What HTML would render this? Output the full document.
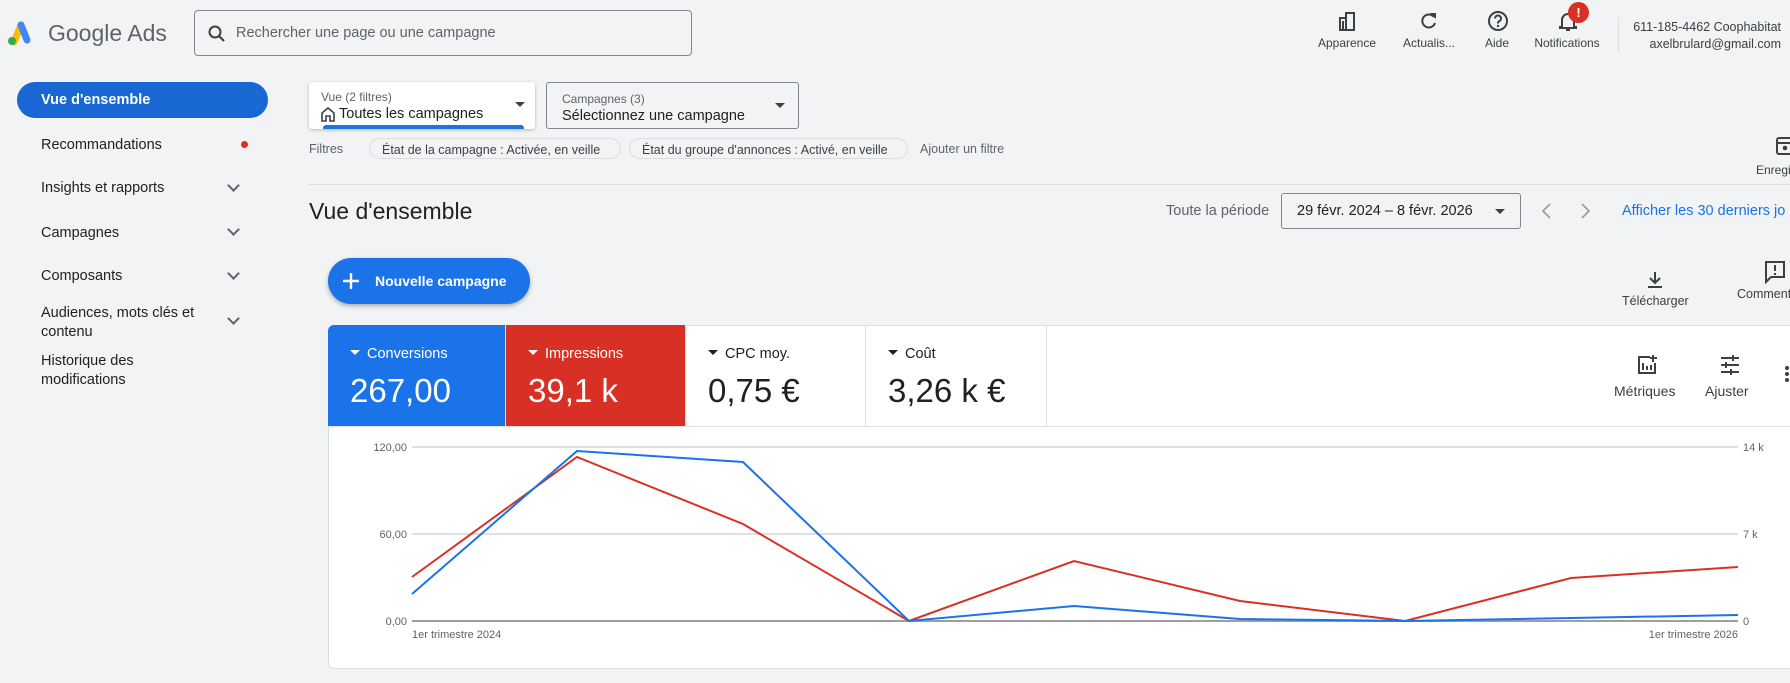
<!DOCTYPE html>
<html><head><meta charset="utf-8"><style>
*{box-sizing:border-box;margin:0;padding:0}
body{width:1790px;height:683px;overflow:hidden;background:#f1f3f4;font-family:"Liberation Sans",Arial,sans-serif;color:#202124;position:relative}
.a{position:absolute;white-space:nowrap}
.hi{position:absolute;text-align:center;font-size:12px;color:#3c4043;width:80px}
.nav{position:absolute;left:41px;font-size:14.5px;color:#202124}
.chev{position:absolute;left:229px;width:9px;height:9px;border-right:2px solid #5f6368;border-bottom:2px solid #5f6368;transform:rotate(45deg)}
.chip{position:absolute;top:138px;height:21px;border:1px solid #dadce0;border-radius:11px;font-size:12.5px;color:#3c4043;padding:4px 12px 0;background:#f1f3f4}
.tile{position:absolute;top:325px;height:101px;padding:21px 0 0 22px;border-right:1px solid #e0e0e0}
.tile .l{font-size:14.5px}
.tile .v{font-size:33px;margin-top:10px}
.tri{display:inline-block;width:0;height:0;border-left:5px solid transparent;border-right:5px solid transparent;border-top:5px solid currentColor;vertical-align:middle;margin-right:7px;position:relative;top:-2px}
</style></head><body>

<svg class="a" style="left:5px;top:20px" width="26" height="26" viewBox="0 0 26 26">
<path d="M9 22 L16 5" stroke="#fbbc04" stroke-width="7" stroke-linecap="round"/>
<path d="M16 5 L22 20" stroke="#4285f4" stroke-width="7" stroke-linecap="round"/>
<circle cx="7" cy="21" r="4" fill="#34a853"/>
</svg>
<div class="a" style="left:48px;top:20px;font-size:23px;color:#5f6368">Google Ads</div>

<div class="a" style="left:194px;top:10px;width:498px;height:46px;border:1px solid #80868b;border-radius:4px"></div>
<svg class="a" style="left:207px;top:24px" width="20" height="20" viewBox="0 0 20 20"><circle cx="8" cy="8" r="5.5" stroke="#3c4043" stroke-width="2" fill="none"/><path d="M12 12 L17 17" stroke="#3c4043" stroke-width="2.2"/></svg>
<div class="a" style="left:236px;top:25px;font-size:14.5px;color:#5f6368">Rechercher une page ou une campagne</div>

<svg class="a" style="left:1336px;top:10px" width="22" height="22" viewBox="0 0 22 22"><path d="M4 8h6v12H4zM10 3h8v17h-8z" fill="none" stroke="#3c4043" stroke-width="2"/><rect x="6" y="11" width="2" height="9" fill="#3c4043"/></svg>
<div class="hi" style="left:1307px;top:36px">Apparence</div>
<svg class="a" style="left:1418px;top:10px" width="22" height="22" viewBox="0 0 22 22"><path d="M16 7 A6.5 6.5 0 1 0 17 13" fill="none" stroke="#3c4043" stroke-width="2"/><path d="M12 3h6v6z" fill="#3c4043"/></svg>
<div class="hi" style="left:1389px;top:36px">Actualis...</div>
<svg class="a" style="left:1486px;top:9px" width="24" height="24" viewBox="0 0 24 24"><circle cx="12" cy="12" r="9" fill="none" stroke="#3c4043" stroke-width="2"/><path d="M9 9.5a3 3 0 1 1 4 2.8c-1 .5-1 1-1 2.2" fill="none" stroke="#3c4043" stroke-width="2"/><circle cx="12" cy="17" r="1.2" fill="#3c4043"/></svg>
<div class="hi" style="left:1457px;top:36px">Aide</div>
<svg class="a" style="left:1557px;top:9px" width="22" height="24" viewBox="0 0 22 24"><path d="M5 18V11a6 6 0 0 1 12 0v7h2v1H3v-1z" fill="none" stroke="#3c4043" stroke-width="2"/><path d="M9 21h4" stroke="#3c4043" stroke-width="2"/></svg>
<div class="a" style="left:1568px;top:2px;width:21px;height:21px;border-radius:50%;background:#d93025;color:#fff;font-size:13px;font-weight:bold;text-align:center;line-height:21px">!</div>
<div class="hi" style="left:1527px;top:36px">Notifications</div>
<div class="a" style="left:1618px;top:18px;width:1px;height:34px;background:#dadce0"></div>
<div class="a" style="right:9px;top:19px;font-size:12.5px;color:#3c4043;text-align:right;line-height:17px">611-185-4462 Coophabitat<br>axelbrulard@gmail.com</div>

<div class="a" style="left:17px;top:82px;width:251px;height:36px;border-radius:18px;background:#1967d2"></div>
<div class="nav" style="top:92px;color:#fff;font-weight:bold">Vue d'ensemble</div>
<div class="nav" style="top:137px">Recommandations</div>
<div class="a" style="left:241px;top:141px;width:7px;height:7px;border-radius:50%;background:#d93025"></div>
<div class="nav" style="top:180px">Insights et rapports</div><div class="chev" style="top:181px"></div>
<div class="nav" style="top:225px">Campagnes</div><div class="chev" style="top:225px"></div>
<div class="nav" style="top:268px">Composants</div><div class="chev" style="top:269px"></div>
<div class="nav" style="top:304px;line-height:19px">Audiences, mots clés et<br>contenu</div><div class="chev" style="top:314px"></div>
<div class="nav" style="top:352px;line-height:19px">Historique des<br>modifications</div>

<div class="a" style="left:309px;top:82px;width:226px;height:47px;background:#fff;border-radius:3px;box-shadow:0 1px 3px rgba(0,0,0,.25);overflow:hidden">
 <div class="a" style="left:12px;top:8px;font-size:12px;color:#5f6368">Vue (2 filtres)</div>
 <svg class="a" style="left:12px;top:25px" width="14" height="15" viewBox="0 0 14 15"><path d="M1 14V6l6-5 6 5v8h-4V9H5v5z" fill="none" stroke="#3c4043" stroke-width="1.6"/></svg>
 <div class="a" style="left:30px;top:24px;font-size:14.5px">Toutes les campagnes</div>
 <div class="a" style="left:206px;top:20px;border-left:5px solid transparent;border-right:5px solid transparent;border-top:5px solid #3c4043"></div>
 <div class="a" style="left:14px;top:43px;width:201px;height:6px;background:#1a73e8;border-radius:3px"></div>
</div>
<div class="a" style="left:546px;top:82px;width:253px;height:47px;border:1px solid #80868b;border-radius:3px">
 <div class="a" style="left:15px;top:9px;font-size:12px;color:#5f6368">Campagnes (3)</div>
 <div class="a" style="left:15px;top:25px;font-size:14.5px">Sélectionnez une campagne</div>
 <div class="a" style="left:228px;top:20px;border-left:5px solid transparent;border-right:5px solid transparent;border-top:5px solid #3c4043"></div>
</div>

<div class="a" style="left:309px;top:142px;font-size:12.5px;color:#5f6368">Filtres</div>
<div class="chip" style="left:369px;width:252px">État de la campagne : Activée, en veille</div>
<div class="chip" style="left:629px;width:279px">État du groupe d'annonces : Activé, en veille</div>
<div class="a" style="left:920px;top:142px;font-size:12.5px;color:#5f6368">Ajouter un filtre</div>
<svg class="a" style="left:1776px;top:137px" width="18" height="18" viewBox="0 0 18 18"><rect x="1" y="1" width="16" height="16" rx="2" fill="none" stroke="#3c4043" stroke-width="2"/><path d="M1 6h16" stroke="#3c4043" stroke-width="2"/><circle cx="9" cy="11" r="2.3" fill="#3c4043"/></svg>
<div class="a" style="left:1756px;top:163px;font-size:12px;color:#3c4043">Enregi</div>
<div class="a" style="left:309px;top:184px;width:1481px;height:1px;background:#dadce0"></div>

<div class="a" style="left:309px;top:198px;font-size:23px">Vue d'ensemble</div>
<div class="a" style="left:1166px;top:203px;font-size:14.5px;color:#5f6368">Toute la période</div>
<div class="a" style="left:1281px;top:193px;width:240px;height:36px;border:1px solid #80868b;border-radius:3px">
 <div class="a" style="left:15px;top:9px;font-size:14.5px">29 févr. 2024 – 8 févr. 2026</div>
 <div class="a" style="left:213px;top:15px;border-left:5px solid transparent;border-right:5px solid transparent;border-top:5px solid #3c4043"></div>
</div>
<svg class="a" style="left:1538px;top:201px" width="60" height="20" viewBox="0 0 60 20"><path d="M12 3L5 10l7 7M44 3l7 7-7 7" fill="none" stroke="#9aa0a6" stroke-width="1.8"/></svg>
<div class="a" style="left:1622px;top:203px;font-size:14.5px;color:#1a73e8">Afficher les 30 derniers jo</div>

<div class="a" style="left:328px;top:258px;width:202px;height:46px;border-radius:23px;background:#1a73e8;box-shadow:0 2px 5px rgba(0,0,0,.3)"></div>
<svg class="a" style="left:341px;top:271px" width="20" height="20" viewBox="0 0 20 20"><path d="M10 2v16M2 10h16" stroke="#fff" stroke-width="2.4"/></svg>
<div class="a" style="left:375px;top:273px;font-size:14px;color:#fff;font-weight:bold">Nouvelle campagne</div>

<svg class="a" style="left:1646px;top:270px" width="18" height="20" viewBox="0 0 18 20"><path d="M9 2v11M4 8l5 5 5-5M2 17h14" fill="none" stroke="#3c4043" stroke-width="2"/></svg>
<div class="a" style="left:1622px;top:294px;font-size:12.5px;color:#3c4043">Télécharger</div>
<svg class="a" style="left:1764px;top:260px" width="22" height="24" viewBox="0 0 22 24"><path d="M2 2h18v15H7l-5 5z" fill="none" stroke="#3c4043" stroke-width="2"/><path d="M11 5v6M11 13v2" stroke="#3c4043" stroke-width="2"/></svg>
<div class="a" style="left:1737px;top:287px;font-size:12.5px;color:#3c4043">Comment</div>

<div class="a" style="left:328px;top:325px;width:1470px;height:344px;background:#fff;border:1px solid #dadce0;border-radius:6px;overflow:hidden"></div>
<div class="tile" style="left:328px;width:178px;background:#1a73e8;color:#fff;border-radius:6px 0 0 0"><div class="l"><span class="tri"></span>Conversions</div><div class="v">267,00</div></div>
<div class="tile" style="left:506px;width:180px;background:#d93025;color:#fff"><div class="l"><span class="tri"></span>Impressions</div><div class="v">39,1 k</div></div>
<div class="tile" style="left:686px;width:180px;color:#202124"><div class="l"><span class="tri"></span>CPC moy.</div><div class="v">0,75 €</div></div>
<div class="tile" style="left:866px;width:181px;color:#202124"><div class="l"><span class="tri"></span>Coût</div><div class="v">3,26 k €</div></div>
<div class="a" style="left:328px;top:426px;width:1462px;height:1px;background:#e0e0e0"></div>
<svg class="a" style="left:1636px;top:354px" width="22" height="22" viewBox="0 0 22 22"><path d="M14 3H3v16h16V9" fill="none" stroke="#3c4043" stroke-width="2"/><path d="M7 9v7M11 12v4M15 11v5M17 1v7M14 4h7" stroke="#3c4043" stroke-width="2"/></svg>
<div class="a" style="left:1614px;top:383px;font-size:14px;color:#3c4043">Métriques</div>
<svg class="a" style="left:1719px;top:354px" width="22" height="22" viewBox="0 0 22 22"><path d="M2 4h18M2 11h18M2 18h18" stroke="#3c4043" stroke-width="2"/><path d="M14 1v6M7 8v6M12 15v6" stroke="#3c4043" stroke-width="2"/></svg>
<div class="a" style="left:1705px;top:383px;font-size:14px;color:#3c4043">Ajuster</div>
<div class="a" style="left:1785px;top:366px;width:4px;height:16px;border-left:4px dotted #3c4043"></div>

<svg class="a" style="left:0;top:0" width="1790" height="683">
<g stroke="#e0e0e0" stroke-width="2"><line x1="412" y1="447" x2="1738" y2="447"/><line x1="412" y1="534" x2="1738" y2="534"/></g>
<line x1="412" y1="621" x2="1738" y2="621" stroke="#9e9e9e" stroke-width="2"/>
<g font-family="Liberation Sans,Arial,sans-serif" font-size="11" fill="#5f6368">
<text x="407" y="451" text-anchor="end">120,00</text><text x="407" y="538" text-anchor="end">60,00</text><text x="407" y="625" text-anchor="end">0,00</text>
<text x="1743" y="451">14 k</text><text x="1743" y="538">7 k</text><text x="1743" y="625">0</text>
<text x="412" y="638">1er trimestre 2024</text><text x="1738" y="638" text-anchor="end">1er trimestre 2026</text>
</g>
<polyline fill="none" stroke="#d93025" stroke-width="2" points="412,577 577,457 743,524 909,621 1074,561 1240,601 1405,621 1571,578 1738,567"/>
<polyline fill="none" stroke="#1a73e8" stroke-width="2" points="412,594 577,451 743,462 909,621 1074,606 1240,619 1405,621 1571,618 1738,615"/>
</svg>
</body></html>
